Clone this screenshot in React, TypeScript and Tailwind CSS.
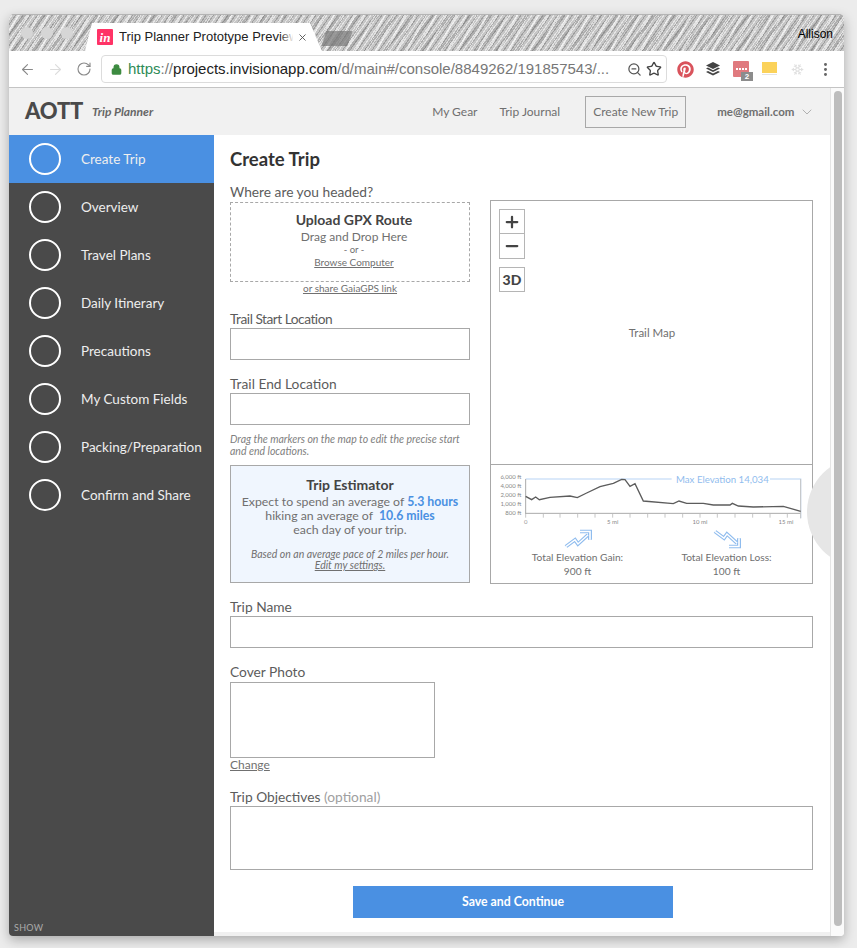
import React from 'react';
import { ArrowLeft, ArrowRight, RotateCw, Lock, ZoomOut, Star, X, ChevronDown, Plus, Minus, Snowflake, EllipsisVertical } from 'lucide-react';
import { FaPinterest } from 'react-icons/fa';

const navItems = [
  'Create Trip',
  'Overview',
  'Travel Plans',
  'Daily Itinerary',
  'Precautions',
  'My Custom Fields',
  'Packing/Preparation',
  'Confirm and Share',
];

const elevationLine =
  '137,112 155,122 167,114 178,122 210,115 270,111 292,116 320,102 360,83 400,73 425,61 435,62 450,82 465,74 490,126 580,134 597,126 620,133 670,133 700,138 750,138 757,133 775,141 820,144 910,142 962,157';

function Label({ children }: { children: React.ReactNode }) {
  return <div className="text-[13.75px] leading-[18px] text-[#5c5c5c]">{children}</div>;
}

function Field() {
  return <div className="h-[32px] border border-[#a8a8a8] bg-white" />;
}

function ElevationChart() {
  return (
    <svg width="321" height="62" viewBox="33 18 963 186" className="block">
      <polyline points="137,60 575,60" fill="none" stroke="#cfe2f8" strokeWidth="4" />
      <polyline points="870,60 962,60 962,178" fill="none" stroke="#cfe2f8" strokeWidth="4" />
      <text x="588" y="72" fontSize="29" fill="#8fbcee" fontFamily="Lato, sans-serif">Max Elevation 14,034</text>
      <line x1="137" y1="60" x2="137" y2="165" stroke="#aaa" strokeWidth="3" />
      <line x1="137" y1="163" x2="962" y2="163" stroke="#aaa" strokeWidth="3" />
      <line x1="962" y1="60" x2="962" y2="178" stroke="#c4c4c4" strokeWidth="3" />
      {[137, 190, 240, 293, 345, 398, 450, 503, 555, 608, 660, 712, 765, 818, 870, 922].map((x) => (
        <line key={x} x1={x} y1="165" x2={x} y2="176" stroke="#aaa" strokeWidth="2" />
      ))}
      {[
        ['6,000 ft', 60],
        ['4,000 ft', 87],
        ['2,000 ft', 113],
        ['1,000 ft', 140],
        ['800 ft', 169],
      ].map(([t, y]) => (
        <text key={t} x="124" y={y} textAnchor="end" fontSize="18" fill="#888" fontFamily="Lato, sans-serif">{t}</text>
      ))}
      <text x="137" y="194" textAnchor="middle" fontSize="18" fill="#999" fontFamily="Lato, sans-serif">0</text>
      <text x="398" y="194" textAnchor="middle" fontSize="18" fill="#888" fontFamily="Lato, sans-serif">5 mi</text>
      <text x="660" y="194" textAnchor="middle" fontSize="18" fill="#888" fontFamily="Lato, sans-serif">10 mi</text>
      <text x="918" y="194" textAnchor="middle" fontSize="18" fill="#888" fontFamily="Lato, sans-serif">15 mi</text>
      <polyline points={elevationLine} fill="none" stroke="#5c5c5c" strokeWidth="4" />
    </svg>
  );
}

function TrendArrow({ down }: { down?: boolean }) {
  const line = 'M2 21 L11 13 L14 18 L24 7';
  const head = 'M16 3 L26 3 L26 13';
  return (
    <svg width="28" height="20" viewBox="0 0 28 24" preserveAspectRatio="none" className={down ? 'mt-[2px] block -scale-y-100' : 'mt-[2px] block'}>
      <path d={line} fill="none" stroke="#8fbcee" strokeWidth="4" />
      <path d={head} fill="none" stroke="#8fbcee" strokeWidth="4" />
      <path d={line} fill="none" stroke="#fff" strokeWidth="1.6" />
      <path d={head} fill="none" stroke="#fff" strokeWidth="1.6" />
    </svg>
  );
}

export default function App() {
  return (
    <div className="h-[948px] w-[857px] overflow-hidden bg-[#ececec] pl-[9px] pt-[14px] font-['Lato',sans-serif]">
      <div className="flex h-[922px] w-[835px] flex-col overflow-hidden rounded-t-[5px] rounded-b-[4px] bg-white shadow-[0_4px_12px_rgba(0,0,0,0.28)]">
        {/* Browser tab strip */}
        <div className="relative flex h-[37px] shrink-0 items-end border-t border-[#b4b4b4] bg-[#c6c6c6] bg-[repeating-linear-gradient(125deg,transparent_0px,transparent_2px,rgba(255,255,255,0.55)_2px,rgba(255,255,255,0.55)_3px,transparent_3px,transparent_5px,rgba(110,110,110,0.45)_5px,rgba(110,110,110,0.45)_6px),repeating-linear-gradient(118deg,transparent_0px,transparent_7px,rgba(255,255,255,0.5)_7px,rgba(255,255,255,0.5)_9px),repeating-linear-gradient(131deg,transparent_0px,transparent_11px,rgba(120,120,120,0.3)_11px,rgba(120,120,120,0.3)_14px)]">
          <div className="absolute left-[12px] top-[12px] flex gap-[8px]">
            <span className="h-[12px] w-[12px] rounded-full bg-[#d6d6d6]" />
            <span className="h-[12px] w-[12px] rounded-full bg-[#d6d6d6]" />
            <span className="h-[12px] w-[12px] rounded-full bg-[#d6d6d6]" />
          </div>
          <div className="relative ml-[76px] flex h-[28px] w-[237px] items-center bg-white pl-[12px] font-['Liberation_Sans',sans-serif] text-[13px] text-[#222] [clip-path:polygon(7px_0,225px_0,237px_100%,0_100%)]">
            <span className="flex h-[16px] w-[16px] items-center justify-center rounded-[1px] bg-[#ff3366] font-['Liberation_Serif',serif] text-[13px] font-bold italic leading-none text-white">in</span>
            <span className="ml-[6px] w-[174px] overflow-hidden whitespace-nowrap">Trip Planner Prototype Preview</span>
            <div className="absolute left-[195px] top-0 h-full w-[14px] bg-gradient-to-r from-transparent to-white" />
            <X size={11} strokeWidth={2} className="ml-[4px] text-[#555]" />
          </div>
          <div className="mb-[5px] ml-[2px] h-[15px] w-[26px] -skew-x-[20deg] bg-[#777] opacity-70" />
          <span className="absolute right-[11px] top-[12px] font-['Liberation_Sans',sans-serif] text-[12px] leading-[14px] text-black">Allison</span>
        </div>

        {/* Browser toolbar */}
        <div className="flex h-[37px] shrink-0 items-center border-b border-[#c4c4c4] bg-white">
          <ArrowLeft size={17} strokeWidth={1.6} className="ml-[10px] text-[#8a8a8a]" />
          <ArrowRight size={17} strokeWidth={1.6} className="ml-[11px] text-[#dcdcdc]" />
          <RotateCw size={16} strokeWidth={1.7} className="ml-[12px] text-[#8a8a8a]" />
          <div className="ml-[9px] flex h-[28px] w-[566px] items-center rounded-[4px] border border-[#dcdcdc] pl-[9px] font-['Liberation_Sans',sans-serif] text-[15px]">
            <Lock size={11} strokeWidth={3} className="text-[#3d8b40]" fill="#3d8b40" />
            <span className="ml-[6px] whitespace-nowrap text-[#777]">
              <span className="text-[#2e8b57]">https</span>://<span className="text-[#222]">projects.invisionapp.com</span>/d/main#/console/8849262/191857543/...
            </span>
            <ZoomOut size={15} strokeWidth={2} className="ml-auto text-[#555]" />
            <Star size={16} strokeWidth={2} className="ml-[4px] mr-[4px] text-[#444]" />
          </div>
          <FaPinterest size={17} className="ml-[10px] text-[#d9535c]" />
          <svg width="16" height="16" viewBox="0 0 16 16" className="ml-[11px]">
            <path d="M8 1 L15 4.5 L8 8 L1 4.5 Z" fill="#444" />
            <path d="M1 7.5 L3 6.6 L8 9.2 L13 6.6 L15 7.5 L8 11 Z" fill="#444" />
            <path d="M1 11 L3 10 L8 12.6 L13 10 L15 11 L8 14.5 Z" fill="#444" />
          </svg>
          <div className="relative ml-[12px] flex h-[16px] w-[16px] items-center justify-center gap-[1px] rounded-[1px] bg-[#e07a7f]">
            <span className="h-[2px] w-[2px] bg-white" />
            <span className="h-[2px] w-[2px] bg-white" />
            <span className="h-[2px] w-[2px] bg-white" />
            <span className="h-[2px] w-[2px] bg-white" />
            <span className="absolute -bottom-[4px] -right-[4px] h-[9px] w-[12px] bg-[#8c8c8c] text-center font-['Liberation_Sans',sans-serif] text-[8px] font-bold leading-[9px] text-white">2</span>
          </div>
          <div className="ml-[13px] flex h-[14px] w-[15px] flex-col">
            <div className="h-[11px] bg-[#fbd25a]" />
            <div className="mt-[1px] h-[1px] bg-[#e4e4e4]" />
          </div>
          <Snowflake size={13} className="ml-[14px] text-[#e0e0e0]" />
          <EllipsisVertical size={17} strokeWidth={2.2} className="ml-[13px] text-[#666]" />
        </div>

        {/* App area */}
        <div className="flex min-h-0 flex-1">
          <div className="flex min-w-0 w-[821px] flex-col">
            <header className="flex h-[47px] shrink-0 items-center bg-[#f1f1f1] pl-[16px] pt-[1px]">
              <span className="-mt-[3px] text-[22px] font-black leading-none tracking-[-0.2px] text-[#4a4a4a]">AOTT</span>
              <span className="ml-[9px] text-[12px] font-bold italic text-[#666]">Trip Planner</span>
              <span className="ml-[279px] text-[12px] text-[#6f6f6f]">My Gear</span>
              <span className="ml-[22px] text-[12px] text-[#6f6f6f]">Trip Journal</span>
              <span className="ml-[25px] flex h-[32px] w-[101px] items-center justify-center border border-[#a8a8a8] text-[12px] text-[#6f6f6f]">Create New Trip</span>
              <span className="ml-[31px] text-[11.5px] font-bold text-[#6f6f6f]">me@gmail.com</span>
              <ChevronDown size={16} strokeWidth={1.1} className="ml-[5px] text-[#999]" />
            </header>

            <div className="relative flex min-h-0 flex-1 overflow-hidden">
              {/* Sidebar */}
              <aside className="relative w-[205px] shrink-0 bg-[#4a4a4a]">
                {navItems.map((item, i) => (
                  <div key={item} className={i === 0 ? 'flex h-[48px] items-center bg-[#4a90e2] pl-[20px]' : 'flex h-[48px] items-center pl-[20px]'}>
                    <span className="h-[32px] w-[32px] rounded-full border-2 border-white" />
                    <span className="ml-[20px] text-[13.5px] text-[#eeeeee]">{item}</span>
                  </div>
                ))}
                <span className="absolute bottom-[2px] left-[5px] text-[9px] tracking-[0.3px] text-[#aaaaaa]">SHOW</span>
              </aside>

              {/* Form */}
              <main className="relative flex-1 overflow-hidden bg-white">
                <div className="h-[797px] px-[16px] pr-[17px]">
                  <h1 className="pt-[13px] text-[18.5px] font-bold leading-[22px] text-[#333]">Create Trip</h1>
                  <div className="flex">
                    <div className="w-[240px]">
                      <div className="mt-[13px] text-[13.75px] leading-[18px] text-[#5c5c5c]">Where are you headed?</div>
                      <div className="mt-[1px] flex h-[80px] flex-col items-center border border-dashed border-[#a8a8a8] pl-[8px] pt-[9px] text-[#707070]">
                        <div className="text-[14px] font-bold leading-[15px] text-[#444]">Upload GPX Route</div>
                        <div className="mt-[2px] text-[12px] leading-[15px]">Drag and Drop Here</div>
                        <div className="text-[9.5px] leading-[11px]">- or -</div>
                        <div className="text-[10px] leading-[14px] underline">Browse Computer</div>
                      </div>
                      <div className="text-center text-[10px] leading-[13px] text-[#707070] underline">or share GaiaGPS link</div>

                      <div className="mt-[15px]"><Label><span className="tracking-[-0.5px]">Trail Start Location</span></Label></div>
                      <Field />
                      <div className="mt-[15px]"><Label>Trail End Location</Label></div>
                      <Field />
                      <div className="mt-[8px] text-[10.5px] italic leading-[12px] text-[#808080]">
                        Drag the markers on the map to edit the precise start and end locations.
                      </div>

                      <div className="mt-[8px] h-[118px] border border-[#a8a8a8] bg-[#f0f6fe] pt-[12px] text-center text-[#707070]">
                        <div className="text-[14px] font-bold leading-[14px] text-[#444]">Trip Estimator</div>
                        <div className="mt-[3px] text-[12.3px] leading-[14px]">
                          Expect to spend an average of <b className="text-[#4a90e2]">5.3 hours</b>
                          <br />
                          hiking an average of <b className="ml-[3px] text-[#4a90e2]">10.6 miles</b>
                          <br />
                          each day of your trip.
                        </div>
                        <div className="mt-[12px] text-[10.5px] italic leading-[11px]">
                          Based on an average pace of 2 miles per hour.
                          <br />
                          <span className="underline">Edit my settings.</span>
                        </div>
                      </div>
                    </div>

                    {/* Map and elevation */}
                    <div className="ml-[20px] mt-[30px] h-[384px] w-[323px] border border-[#a8a8a8]">
                      <div className="relative flex h-[264px] items-center justify-center border-b border-[#a8a8a8] text-[11.5px] text-[#707070]">
                        <span className="pl-[1px]">Trail Map</span>
                        <div className="absolute left-[8px] top-[8px] w-[26px]">
                          <div className="flex h-[25px] items-center justify-center border border-[#b5b5b5]"><Plus size={18} strokeWidth={3} className="text-[#444]" /></div>
                          <div className="flex h-[25px] items-center justify-center border border-t-0 border-[#b5b5b5]"><Minus size={18} strokeWidth={3} className="text-[#444]" /></div>
                          <div className="mt-[8px] flex h-[25px] items-center justify-center border border-[#b5b5b5] text-[14px] font-black text-[#444]">3D</div>
                        </div>
                      </div>
                      <div className="h-[117px]">
                        <ElevationChart />
                        <div className="flex pl-[12px] text-[10.2px] leading-[14px] text-[#707070]">
                          <div className="flex w-[149px] flex-col items-center">
                            <TrendArrow />
                            <div className="mt-[1px]">Total Elevation Gain:</div>
                            <div>900 ft</div>
                          </div>
                          <div className="flex w-[149px] flex-col items-center">
                            <TrendArrow down />
                            <div className="mt-[1px]">Total Elevation Loss:</div>
                            <div>100 ft</div>
                          </div>
                        </div>
                      </div>
                    </div>
                  </div>

                  <div className="mt-[14px]"><Label>Trip Name</Label></div>
                  <Field />
                  <div className="mt-[15px]"><Label>Cover Photo</Label></div>
                  <div className="mt-[1px] h-[76px] w-[205px] border border-[#a8a8a8]" />
                  <div className="text-[12px] leading-[14px] text-[#707070] underline">Change</div>
                  <div className="mt-[16px]">
                    <Label>Trip Objectives <span className="text-[#a0a0a0]">(optional)</span></Label>
                  </div>
                  <div className="h-[64px] border border-[#a8a8a8]" />
                  <div className="mt-[16px] pl-[123px]">
                    <button className="h-[32px] w-[320px] bg-[#4a90e2] text-[12.3px] font-bold text-white">Save and Continue</button>
                  </div>
                </div>
                <div className="h-[4px] bg-[#f0f0f0]" />
                <div className="absolute left-[593px] top-[322px] h-[110px] w-[110px] rounded-full bg-[#e6e6e6]" />
              </main>
            </div>
          </div>

          {/* Page scrollbar */}
          <div className="w-[14px] shrink-0 border-l border-[#e4e4e4] bg-[#fafafa] pl-[3px] pt-[3px]">
            <div className="h-[835px] w-[8px] rounded-full bg-[#bdbdbd]" />
          </div>
        </div>
      </div>
    </div>
  );
}
